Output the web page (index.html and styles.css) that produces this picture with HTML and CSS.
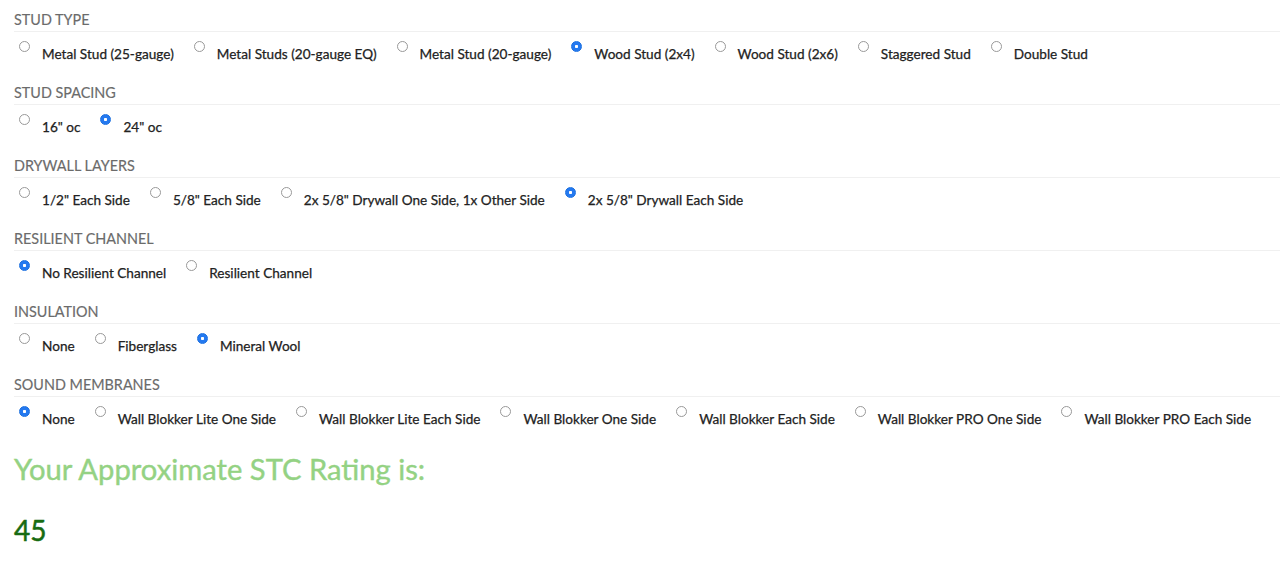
FILE: index.html
```html
<!DOCTYPE html>
<html lang="en">

<head>
    <meta charset="UTF-8">
    <meta name="viewport" content="width=device-width, initial-scale=1.0">
    <title>STC Rating Calculator</title>
    <link rel="stylesheet" href="styles.css">
</head>

<body>
    <!-- wall assembly options -->
    <form class="calc">
        <div class="group">
            <h4 class="group-title">Stud Type</h4>
            <div class="options">
                <label class="opt"><input type="radio" name="stud"><span>Metal Stud (25-gauge)</span></label>
                <label class="opt"><input type="radio" name="stud"><span>Metal Studs (20-gauge EQ)</span></label>
                <label class="opt"><input type="radio" name="stud"><span>Metal Stud (20-gauge)</span></label>
                <label class="opt"><input type="radio" name="stud" checked><span>Wood Stud (2x4)</span></label>
                <label class="opt"><input type="radio" name="stud"><span>Wood Stud (2x6)</span></label>
                <label class="opt"><input type="radio" name="stud"><span>Staggered Stud</span></label>
                <label class="opt"><input type="radio" name="stud"><span>Double Stud</span></label>
            </div>
        </div>
        <div class="group">
            <h4 class="group-title">Stud Spacing</h4>
            <div class="options">
                <label class="opt"><input type="radio" name="spacing"><span>16" oc</span></label>
                <label class="opt"><input type="radio" name="spacing" checked><span>24" oc</span></label>
            </div>
        </div>
        <div class="group">
            <h4 class="group-title">Drywall Layers</h4>
            <div class="options">
                <label class="opt"><input type="radio" name="drywall"><span>1/2" Each Side</span></label>
                <label class="opt"><input type="radio" name="drywall"><span>5/8" Each Side</span></label>
                <label class="opt"><input type="radio" name="drywall"><span>2x 5/8" Drywall One Side, 1x Other Side</span></label>
                <label class="opt"><input type="radio" name="drywall" checked><span>2x 5/8" Drywall Each Side</span></label>
            </div>
        </div>
        <div class="group">
            <h4 class="group-title">Resilient Channel</h4>
            <div class="options">
                <label class="opt"><input type="radio" name="rc" checked><span>No Resilient Channel</span></label>
                <label class="opt"><input type="radio" name="rc"><span>Resilient Channel</span></label>
            </div>
        </div>
        <div class="group">
            <h4 class="group-title">Insulation</h4>
            <div class="options">
                <label class="opt"><input type="radio" name="insul"><span>None</span></label>
                <label class="opt"><input type="radio" name="insul"><span>Fiberglass</span></label>
                <label class="opt"><input type="radio" name="insul" checked><span>Mineral Wool</span></label>
            </div>
        </div>
        <div class="group">
            <h4 class="group-title">Sound Membranes</h4>
            <div class="options">
                <label class="opt"><input type="radio" name="membrane" checked><span>None</span></label>
                <label class="opt"><input type="radio" name="membrane"><span>Wall Blokker Lite One Side</span></label>
                <label class="opt"><input type="radio" name="membrane"><span>Wall Blokker Lite Each Side</span></label>
                <label class="opt"><input type="radio" name="membrane"><span>Wall Blokker One Side</span></label>
                <label class="opt"><input type="radio" name="membrane"><span>Wall Blokker Each Side</span></label>
                <label class="opt"><input type="radio" name="membrane"><span>Wall Blokker PRO One Side</span></label>
                <label class="opt"><input type="radio" name="membrane"><span>Wall Blokker PRO Each Side</span></label>
            </div>
        </div>
    </form>

    <h2 class="result-title">Your Approximate STC Rating is:</h2>
    <p class="result">45</p>
</body>

</html>
```

FILE: styles.css
```css
body {
    margin: 0;
    padding: 10px 0 0 14px;
    background: #fff;
    font-family: Lato, "Open Sans", sans-serif;
    color: #222;
}

.calc {
    margin: 0;
}

.group-title {
    margin: 0;
    height: 21px;
    line-height: 20px;
    font-size: 14.4px;
    font-weight: normal;
    text-transform: uppercase;
    color: #6b6b6b;
    -webkit-text-stroke: 0.15px #6b6b6b;
    border-bottom: 1px solid #f0f0f0;
}

.options {
    display: flex;
    gap: 20px;
    height: 51px;
}

.opt {
    display: flex;
    align-items: flex-start;
    gap: 12px;
    font-size: 13.6px;
    cursor: pointer;
}

.opt span {
    margin-top: 14px;
    line-height: 16px;
    -webkit-text-stroke: 0.25px #222;
}

/* small mac-like radio buttons */
.opt input {
    appearance: none;
    -webkit-appearance: none;
    width: 11px;
    height: 11px;
    margin: 9px 0 0 5px;
    border: 1px solid #999;
    border-radius: 50%;
    background: #fff;
    flex: none;
}

.opt input:checked {
    border-color: #1a6fe0;
    background: radial-gradient(circle, #fff 0 1.3px, #2479f0 2px);
}

.opt+.opt input {
    margin-left: 0;
}

.result-title {
    margin: 4px 0 0;
    font-size: 29.2px;
    line-height: 34px;
    font-weight: normal;
    color: #94d283;
    -webkit-text-stroke: 0.4px #94d283;
}

.result {
    margin: 27px 0 0;
    font-size: 28px;
    line-height: 34px;
    color: #176b12;
    -webkit-text-stroke: 0.5px #176b12;
}
```
